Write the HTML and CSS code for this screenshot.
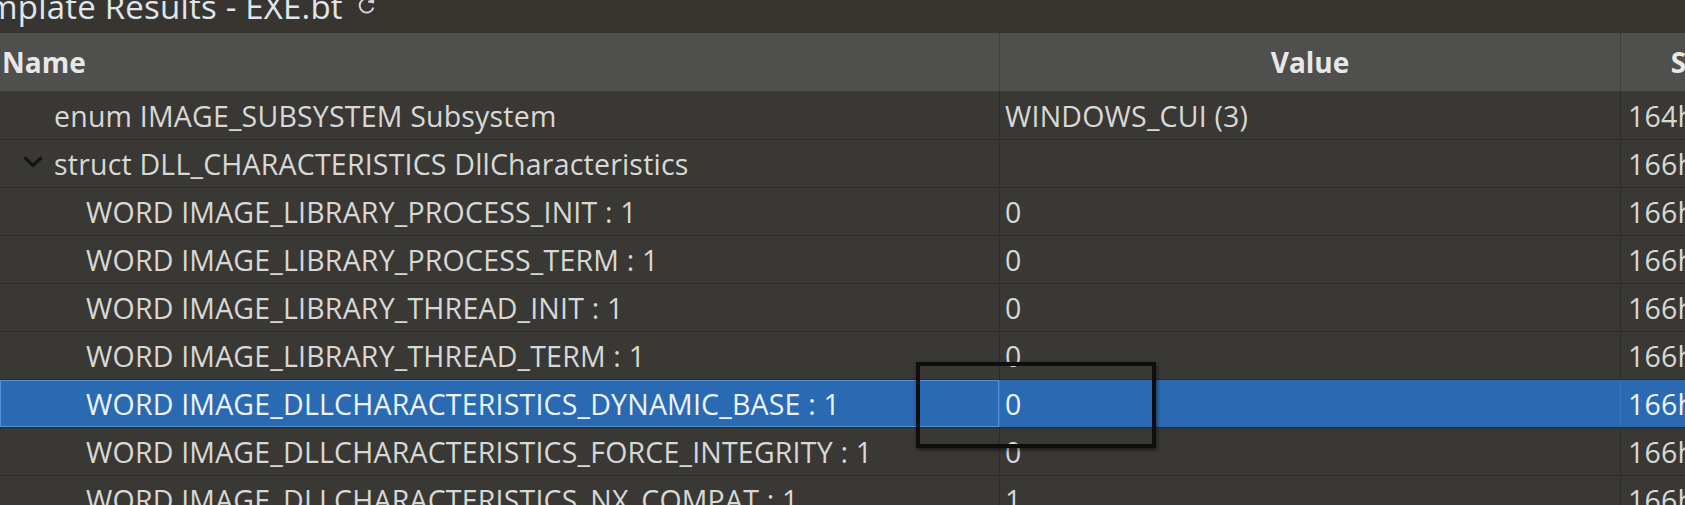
FILE: index.html
```html
<!DOCTYPE html>
<html lang="en">
<head>
<meta charset="utf-8">
<title>Template Results - EXE.bt</title>
<link rel="stylesheet" href="styles.css">
</head>
<body>
<div class="panel">
  <div class="titlebar">
    <span class="title">Template Results - EXE.bt</span>
    <svg class="refresh" viewBox="0 0 16 16" width="21" height="21" aria-hidden="true">
      <path d="M12.6 5.2 A5.3 5.3 0 1 0 13.2 9.6" fill="none" stroke="#cdd4dc" stroke-width="1.5"/>
      <path d="M13.4 1.6 L13 5.6 L9.2 5" fill="none" stroke="#cdd4dc" stroke-width="1.5"/>
    </svg>
  </div>
  <div class="grid">
    <div class="row header">
      <div class="cell name-h">Name</div>
      <div class="cell value-h">Value</div>
      <div class="cell start-h">Start</div>
    </div>
    <div class="row">
      <div class="cell name lvl1">enum IMAGE_SUBSYSTEM Subsystem</div>
      <div class="cell value">WINDOWS_CUI (3)</div>
      <div class="cell start">164h</div>
    </div>
    <div class="row">
      <div class="cell name lvl0">
        <svg class="chev" viewBox="0 0 22 13" width="22" height="13" aria-hidden="true"><polyline points="2.5,2.5 11,10.5 19.5,2.5" fill="none" stroke="#141414" stroke-width="3.2"/></svg>
        <span>struct DLL_CHARACTERISTICS DllCharacteristics</span>
      </div>
      <div class="cell value"></div>
      <div class="cell start">166h</div>
    </div>
    <div class="row">
      <div class="cell name lvl2">WORD IMAGE_LIBRARY_PROCESS_INIT : 1</div>
      <div class="cell value">0</div>
      <div class="cell start">166h</div>
    </div>
    <div class="row">
      <div class="cell name lvl2">WORD IMAGE_LIBRARY_PROCESS_TERM : 1</div>
      <div class="cell value">0</div>
      <div class="cell start">166h</div>
    </div>
    <div class="row">
      <div class="cell name lvl2">WORD IMAGE_LIBRARY_THREAD_INIT : 1</div>
      <div class="cell value">0</div>
      <div class="cell start">166h</div>
    </div>
    <div class="row">
      <div class="cell name lvl2">WORD IMAGE_LIBRARY_THREAD_TERM : 1</div>
      <div class="cell value">0</div>
      <div class="cell start">166h</div>
    </div>
    <div class="row selected">
      <div class="cell name lvl2">WORD IMAGE_DLLCHARACTERISTICS_DYNAMIC_BASE : 1</div>
      <div class="cell value">0</div>
      <div class="cell start">166h</div>
    </div>
    <div class="row">
      <div class="cell name lvl2">WORD IMAGE_DLLCHARACTERISTICS_FORCE_INTEGRITY : 1</div>
      <div class="cell value">0</div>
      <div class="cell start">166h</div>
    </div>
    <div class="row">
      <div class="cell name lvl2">WORD IMAGE_DLLCHARACTERISTICS_NX_COMPAT : 1</div>
      <div class="cell value">1</div>
      <div class="cell start">166h</div>
    </div>
  </div>
  <div class="annot"></div>
</div>
</body>
</html>
```

FILE: styles.css
```css
html, body {
  margin: 0;
  padding: 0;
  background: #3a3834;
  overflow: hidden;
}

.panel {
  position: relative;
  width: 1685px;
  height: 505px;
  overflow: hidden;
  font-family: "Open Sans", "Noto Sans", sans-serif;
  font-size: 28.5px;
  letter-spacing: 0.2px;
  color: #d8d8d6;
}

.titlebar {
  height: 33px;
  background: #383531;
  display: flex;
  align-items: flex-start;
  overflow: hidden;
  white-space: nowrap;
}

.title {
  display: block;
  font-size: 33px;
  line-height: 33px;
  letter-spacing: 0.2px;
  margin-top: -10px;
  margin-left: -50px;
  color: #dfe5ec;
}

.refresh {
  margin-left: 13px;
  margin-top: -5px;
  flex: none;
}

.grid {
  display: flex;
  flex-direction: column;
}

.row {
  display: grid;
  grid-template-columns: 1000px 621px 170px;
  height: 48px;
  box-sizing: border-box;
  border-bottom: 1px solid #2d2b28;
  background: #3a3834;
}

.row.header {
  height: 59px;
  background: #4f4f4e;
  border-bottom: 1px solid #3e3d3b;
  font-weight: 700;
  letter-spacing: 0;
  font-size: 28px;
  color: #e8e8e8;
}

.cell {
  display: flex;
  align-items: center;
  white-space: nowrap;
  overflow: hidden;
  box-sizing: border-box;
  border-right: 1px solid #2f2d2a;
}

.header .cell {
  border-right: 1px solid #3f3e3c;
}

.name-h {
  padding-left: 2px;
}

.value-h, .start-h {
  justify-content: center;
}

.lvl0 {
  padding-left: 22px;
}

.lvl1 {
  padding-left: 54px;
}

.lvl2 {
  padding-left: 86px;
}

.chev {
  margin-right: 10px;
  margin-top: -5px;
  flex: none;
}

.value {
  padding-left: 5px;
}

.start {
  padding-left: 7px;
  border-right: none;
}

.row.selected {
  background: #2a6ab3;
  border-bottom-color: #2d2b28;
  color: #eef4ff;
}

.row.selected .name {
  box-shadow: inset 0 0 0 1px #5592d4;
}

.row.selected .cell {
  border-right-color: #3a74b8;
}

.annot {
  position: absolute;
  left: 916px;
  top: 362px;
  width: 240px;
  height: 86px;
  box-sizing: border-box;
  border: 4px solid #0e0e0e;
  box-shadow: 1px 2px 4px rgba(0, 0, 0, 0.55);
}
```
